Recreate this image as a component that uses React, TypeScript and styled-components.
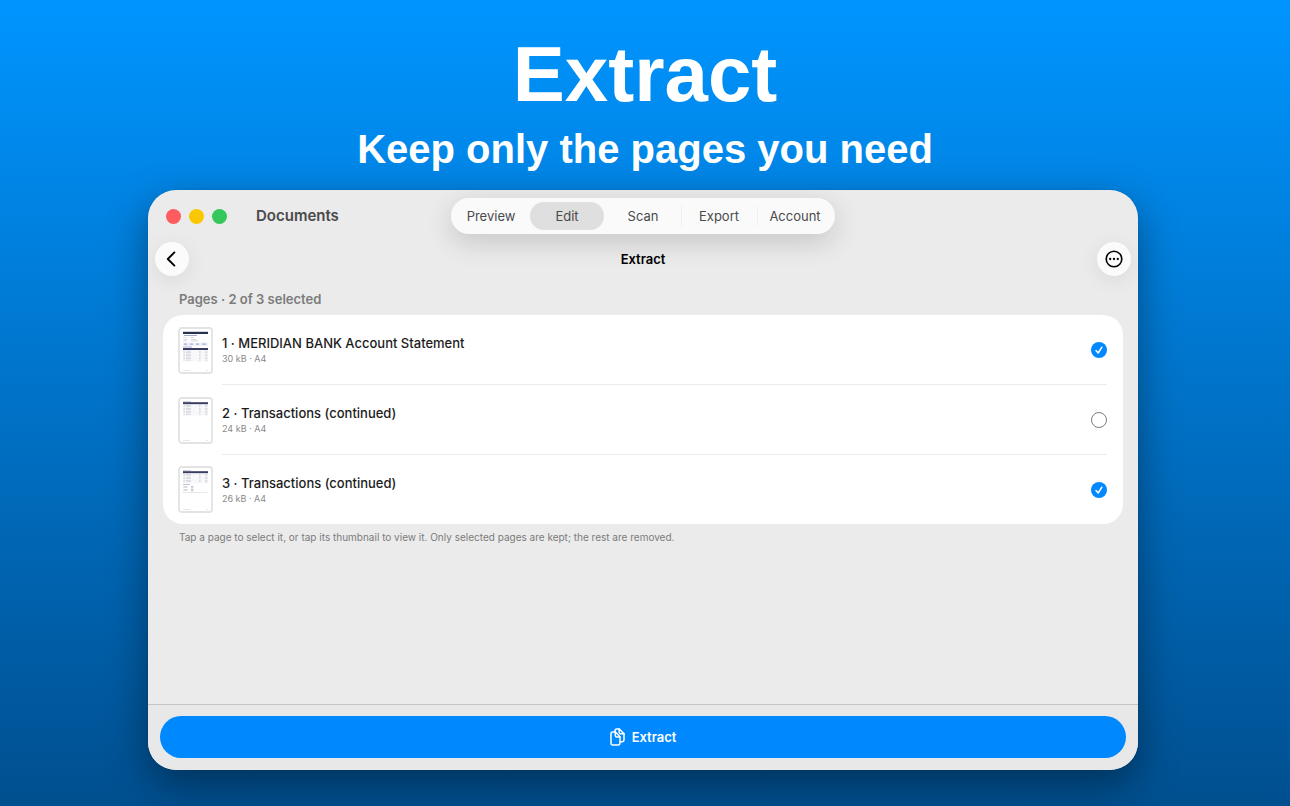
import React, { useState } from 'react';
import styled, { createGlobalStyle } from 'styled-components';

const GlobalStyle = createGlobalStyle`
  *, *::before, *::after { box-sizing: border-box; }
  body { margin: 0; }
  button { font: inherit; border: 0; padding: 0; cursor: pointer; }
`;

const sans = `Inter, 'Liberation Sans', sans-serif`;

const Page = styled.div`
  min-height: 100vh;
  display: flex;
  flex-direction: column;
  padding: 32px 152px 36px 148px;
  background: linear-gradient(#0095ff, #004f8f);
  font-family: ${sans};
  -webkit-font-smoothing: antialiased;
`;

const Hero = styled.header`
  color: #fff;
  text-align: center;
  font-family: 'Liberation Sans', Arial, sans-serif;
  font-weight: 700;
  padding-left: 4px;
`;

const HeroTitle = styled.h1`
  margin: 0;
  font-size: 78px;
  line-height: 84px;
`;

const HeroText = styled.p`
  margin: 8px 0 16px;
  font-size: 40px;
  line-height: 50px;
`;

const Window = styled.main`
  flex: 1;
  display: flex;
  flex-direction: column;
  border-radius: 28px;
  overflow: hidden;
  background: #ebebeb;
`;

const WindowShadow = styled.div`
  flex: 1;
  display: flex;
  flex-direction: column;
  border-radius: 28px;
  box-shadow: 0 0 1px rgba(0, 0, 0, 0.3), 0 14px 40px rgba(0, 0, 0, 0.4);
`;

const TitleBar = styled.div`
  display: grid;
  grid-template-columns: 1fr auto 1fr;
  align-items: center;
  height: 52px;
  padding: 0 18px;
`;

const TitleGroup = styled.div`
  display: flex;
  align-items: center;
  gap: 8px;
`;

const Light = styled.button<{ $color: string }>`
  width: 15px;
  height: 15px;
  border-radius: 50%;
  background: ${(p) => p.$color};
`;

const AppName = styled.span`
  margin-left: 21px;
  font-size: 15px;
  line-height: 20px;
  font-weight: 600;
  color: #4a4a4a;
`;

const Tabs = styled.nav`
  display: flex;
  height: 36px;
  padding: 4px 2px;
  border-radius: 18px;
  background: #fafafa;
  box-shadow: 0 8px 28px rgba(0, 0, 0, 0.16);
`;

const Tab = styled.button<{ $active: boolean; $divided: boolean }>`
  position: relative;
  width: 74px;
  margin: 0 1px;
  border-radius: 14px;
  background: ${(p) => (p.$active ? '#dfdfdf' : 'transparent')};
  color: #4a4a4a;
  font-size: 13px;

  &::before {
    content: '';
    position: absolute;
    left: -1px;
    top: 4px;
    bottom: 4px;
    width: 1px;
    background: ${(p) => (p.$divided ? '#efefef' : 'transparent')};
  }
`;

const Toolbar = styled.div`
  display: flex;
  align-items: center;
  justify-content: space-between;
  padding: 0 7px;
`;

const ScreenTitle = styled.h2`
  margin: 0;
  font-size: 13px;
  line-height: 18px;
  font-weight: 600;
  color: #000;
`;

const RoundButton = styled.button`
  display: flex;
  align-items: center;
  justify-content: center;
  width: 34px;
  height: 34px;
  border-radius: 50%;
  background: #fbfbfb;
  color: #000;
  box-shadow: 0 4px 20px rgba(0, 0, 0, 0.08);
`;

const Content = styled.section`
  flex: 1;
  padding: 14px 15px;
`;

const SectionTitle = styled.h3`
  margin: 0 0 7px 16px;
  font-size: 13px;
  line-height: 18px;
  font-weight: 600;
  color: #7b7b7b;
`;

const Card = styled.ul`
  margin: 0;
  padding: 0;
  list-style: none;
  border-radius: 20px;
  background: #fff;
`;

const Row = styled.li`
  display: flex;
  align-items: center;
  gap: 9px;
  padding: 0 16px 0 15px;
`;

const Thumb = styled.button`
  display: block;
  width: 35px;
  height: 48px;
  background: none;
`;

const RowBody = styled.label`
  flex: 1;
  display: flex;
  align-items: center;
  justify-content: space-between;
  height: 70px;
  border-bottom: 1px solid #ebebeb;

  ${Row}:last-child & {
    height: 69px;
    border-bottom: 0;
  }
`;

const RowText = styled.span`
  display: flex;
  flex-direction: column;
`;

const RowTitle = styled.span`
  font-size: 13px;
  line-height: 18px;
  font-weight: 500;
  color: #1c1c1c;
`;

const RowMeta = styled.span`
  font-size: 9px;
  line-height: 14px;
  color: #8a8a8a;
`;

const CheckBox = styled.span`
  display: grid;
  width: 16px;
  height: 16px;

  & > * { grid-area: 1 / 1; }
  & > svg { pointer-events: none; }
`;

const CheckInput = styled.input`
  appearance: none;
  width: 16px;
  height: 16px;
  margin: 0;
  border: 1px solid #7c7c7c;
  border-radius: 50%;

  &:checked {
    border: 0;
    background: #0088ff;
  }
`;

const Hint = styled.p`
  margin: 6px 16px 0;
  font-size: 10px;
  line-height: 14px;
  color: #7b7b7b;
`;

const Footer = styled.footer`
  padding: 11px 12px 12px;
  border-top: 1px solid #c4c4c6;
  background: #e8e8e8;
`;

const PrimaryButton = styled.button`
  display: flex;
  align-items: center;
  justify-content: center;
  gap: 7px;
  width: 100%;
  height: 42px;
  border-radius: 21px;
  background: #0088ff;
  color: #fff;
  font-size: 13px;
  font-weight: 600;
`;

type Kind = 'statement' | 'list' | 'summary';

const rules = (from: number, count: number) =>
  Array.from({ length: count }, (_, i) => from + i * 1.5);

function TableArt({ y, count }: { y: number; count: number }) {
  return (
    <>
      <rect x="5" y={y} width="25" height="2" fill="#3a3d62" />
      <rect x="5" y={y + 2} width="25" height={count * 1.5 + 1} fill="#e4e4ec" opacity=".25" />
      {rules(y + 2.8, count).map((v) => (
        <g key={v} fill="#9a9cb0" opacity=".5">
          <rect x="5.4" y={v} width="1.6" height=".6" />
          <rect x="8" y={v} width="5" height=".6" />
          <rect x="21" y={v} width="1.6" height=".6" />
          <rect x="27" y={v} width="2.4" height=".6" />
        </g>
      ))}
    </>
  );
}

function PageArt({ kind }: { kind: Kind }) {
  return (
    <svg width="35" height="47" viewBox="0 0 35 47" display="block" aria-hidden="true">
      <rect x="1" y="1" width="33" height="45" rx="2.6" fill="#fff" stroke="#e3e3e3" strokeWidth="1.8" />
      {kind === 'statement' && (
        <>
          <rect x="5" y="4.8" width="25" height="2.2" fill="#26304f" />
          <rect x="6" y="8" width="13" height=".9" fill="#6d7bb0" opacity=".7" />
          <g fill="#8e93a8" opacity=".55">
            <rect x="5.4" y="10.4" width="3" height=".6" />
            <rect x="5.4" y="12" width="4" height=".6" />
            <rect x="5.4" y="13.6" width="3" height=".6" />
            <rect x="13" y="10.4" width="3" height=".6" />
            <rect x="13" y="12" width="5" height=".6" />
            <rect x="13" y="13.6" width="7" height=".6" />
          </g>
          <rect x="5" y="15.6" width="25" height="3.2" fill="#edf0f8" />
          <g fill="#5b6ca8" opacity=".6">
            <rect x="6" y="16.6" width="3" height="1" />
            <rect x="12" y="16.6" width="3" height="1" />
            <rect x="18" y="16.6" width="3" height="1" />
            <rect x="24" y="16.6" width="4" height="1" />
          </g>
          <rect x="5" y="19.6" width="9" height=".8" fill="#6d7bb0" opacity=".7" />
          <TableArt y={21} count={7} />
        </>
      )}
      {kind !== 'statement' && (
        <>
          <rect x="5" y="4.2" width="8" height=".7" fill="#8c92b8" opacity=".6" />
          <TableArt y={5.2} count={kind === 'list' ? 7 : 6} />
        </>
      )}
      {kind === 'summary' && (
        <g fill="#8e8fa6" opacity=".65">
          <rect x="5" y="18" width="7" height=".8" />
          {rules(20, 4).map((v) => (
            <g key={v}>
              <rect x="5.4" y={v} width="4" height=".5" />
              <rect x="13" y={v} width="2.4" height=".8" />
            </g>
          ))}
          <rect x="5" y="26" width="25" height=".3" />
        </g>
      )}
      <rect x="5" y="43" width="7" height=".4" fill="#c4c4c8" />
      <rect x="28" y="43" width="2" height=".4" fill="#c4c4c8" />
    </svg>
  );
}

const pages: { title: string; meta: string; kind: Kind }[] = [
  { title: '1 · MERIDIAN BANK Account Statement', meta: '30 kB · A4', kind: 'statement' },
  { title: '2 · Transactions (continued)', meta: '24 kB · A4', kind: 'list' },
  { title: '3 · Transactions (continued)', meta: '26 kB · A4', kind: 'summary' },
];

const tabs = ['Preview', 'Edit', 'Scan', 'Export', 'Account'];

export default function App() {
  const [selected, setSelected] = useState([true, false, true]);
  const [tab, setTab] = useState(1);
  const toggle = (index: number) =>
    setSelected((prev) => prev.map((value, i) => (i === index ? !value : value)));

  return (
    <>
      <GlobalStyle />
      <Page>
        <Hero>
          <HeroTitle>Extract</HeroTitle>
          <HeroText>Keep only the pages you need</HeroText>
        </Hero>
        <WindowShadow>
          <Window>
            <TitleBar>
              <TitleGroup>
                <Light $color="#ff5c60" aria-label="Close" />
                <Light $color="#fac800" aria-label="Minimize" />
                <Light $color="#34c759" aria-label="Zoom" />
                <AppName>Documents</AppName>
              </TitleGroup>
              <Tabs>
                {tabs.map((name, i) => (
                  <Tab
                    key={name}
                    $active={i === tab}
                    $divided={i > 0 && i !== tab && i - 1 !== tab}
                    onClick={() => setTab(i)}
                  >
                    {name}
                  </Tab>
                ))}
              </Tabs>
            </TitleBar>
            <Toolbar>
              <RoundButton aria-label="Back">
                <svg width="18" height="18" viewBox="0 0 18 18" fill="none" stroke="currentColor" strokeWidth="1.9" strokeLinecap="round" strokeLinejoin="round">
                  <path d="M11.4 2.4 4.8 9l6.600 6.600" />
                </svg>
              </RoundButton>
              <ScreenTitle>Extract</ScreenTitle>
              <RoundButton aria-label="More">
                <svg width="18" height="18" viewBox="0 0 18 18" fill="currentColor">
                  <circle cx="9" cy="9" r="7.8" fill="none" stroke="currentColor" strokeWidth="1.6" />
                  <circle cx="5.2" cy="9" r="1.15" />
                  <circle cx="9" cy="9" r="1.15" />
                  <circle cx="12.8" cy="9" r="1.15" />
                </svg>
              </RoundButton>
            </Toolbar>
            <Content>
              <SectionTitle>Pages · {selected.filter(Boolean).length} of 3 selected</SectionTitle>
              <Card>
                {pages.map((page, i) => (
                  <Row key={page.title}>
                    <Thumb aria-label={`View page ${i + 1}`}>
                      <PageArt kind={page.kind} />
                    </Thumb>
                    <RowBody>
                      <RowText>
                        <RowTitle>{page.title}</RowTitle>
                        <RowMeta>{page.meta}</RowMeta>
                      </RowText>
                      <CheckBox>
                        <CheckInput type="checkbox" checked={selected[i]} onChange={() => toggle(i)} />
                        {selected[i] && (
                          <svg width="16" height="16" viewBox="0 0 16 16" fill="none" stroke="#fff" strokeWidth="1.5" strokeLinecap="round" strokeLinejoin="round">
                            <path d="M5 8.500 7.200 11 10.900 5.200" />
                          </svg>
                        )}
                      </CheckBox>
                    </RowBody>
                  </Row>
                ))}
              </Card>
              <Hint>
                Tap a page to select it, or tap its thumbnail to view it. Only selected pages are kept; the rest are removed.
              </Hint>
            </Content>
            <Footer>
              <PrimaryButton>
                <svg width="15" height="18" viewBox="0 0 15 18" fill="none" stroke="currentColor" strokeWidth="1.5" strokeLinecap="round" strokeLinejoin="round">
                  <path d="M5 3.900V2.700Q5 1 6.700 1H9.300L14 5.700V12Q14 13.700 12.300 13.700H10.200" />
                  <path d="M9.200 1V4.300Q9.200 5.800 10.700 5.800H14" />
                  <path d="M2.700 4.100H5.400L10 8.800V15.300Q10 17 8.300 17H2.700Q1 17 1 15.300V5.800Q1 4.100 2.700 4.100Z" />
                  <path d="M5.300 4.200V7.400Q5.300 8.900 6.800 8.900H9.900" />
                </svg>
                Extract
              </PrimaryButton>
            </Footer>
          </Window>
        </WindowShadow>
      </Page>
    </>
  );
}
